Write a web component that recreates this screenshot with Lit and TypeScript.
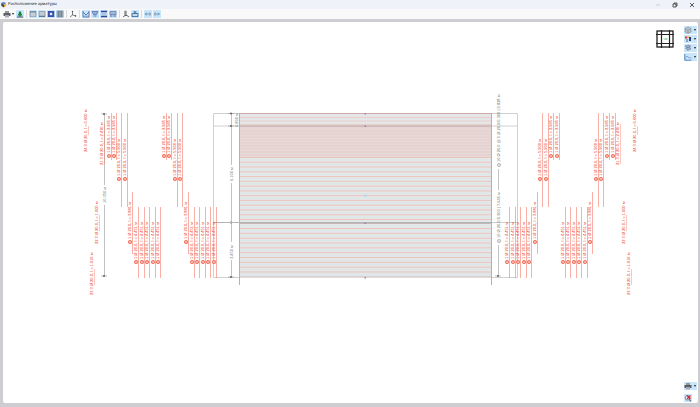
import { LitElement, html, svg, css } from "lit";
import { customElement } from "lit/decorators.js";

const RED = "#f4644f";

/* Toolbar glyphs, drawn on an 8 x 8 grid */
const glyphs: Record<string, unknown> = {
  printer: svg`<path d="M2 1h4v2H2z" fill="#999"/><path d="M.5 3h7v3h-7z" fill="#5b5f65"/><path d="M2 5h4v2.500H2z" fill="#aab"/>`,
  tree: svg`<path d="M4 1l1.700 2H5l1.600 2.400H4.700v1H3.300v-1H1.400L3 3h-.7z" fill="#17803c"/><path d="M1 7h6" stroke="#234" stroke-width=".8"/>`,
  table: svg`<path d="M1 1.500h6v5H1z" fill="#bcc3c9" stroke="#8298ab" stroke-width=".7"/><path d="M1 2h6" stroke="#5b7892"/><path d="M3 2v4.500M5 2v4.500" stroke="#e6eaee" stroke-width=".5"/>`,
  slab: svg`<path d="M1 1.500h6v5H1z" fill="#c4c9cd" stroke="#7f95a8" stroke-width=".7"/><path d="M1 6.300h6" stroke="#587088"/>`,
  opening: svg`<path d="M.8 1h6.400v6H.8z" fill="#3a4fa8"/><path d="M2.800 2.800h2.400v2.400H2.800z" fill="#e6e8ff"/>`,
  bars: svg`<path d="M1 1h6v6H1z" fill="#adb7c0" stroke="#74899c" stroke-width=".6"/><path d="M2.500 1v6M4 1v6M5.500 1v6" stroke="#5d6f80" stroke-width=".7"/>`,
  axes: svg`<path d="M3.500 1.500v3.500l-2.500 2M3.500 5l3.500 1" stroke="#555b60" stroke-width=".8" fill="none"/><path d="M2.700 2l.8-1.200.8 1.200zM6 5l1.500 1-1.500.8z" fill="#333"/>`,
  mesh: svg`<path d="M1 1v6h6V1M1 2l3 3 3-3" stroke="#5673ad" stroke-width=".9" fill="none"/><path d="M1 6h6" stroke="#7c90bd" stroke-width=".6"/>`,
  funnel: svg`<path d="M1 1.500h6L5.500 4.500h-3z" fill="#9aafd6" stroke="#4d6aaf" stroke-width=".7"/><path d="M2.500 6h3" stroke="#4d6aaf" stroke-width=".9"/>`,
  layers: svg`<path d="M1 1.500h6M1 6.500h6" stroke="#2f4796" stroke-width="1.300"/><path d="M1.500 4h5" stroke="#93a7cf"/>`,
  frame: svg`<path d="M1 1.500h6v3H1z" fill="#a7b8d6" stroke="#5e78ac" stroke-width=".7"/><path d="M2 4.500v2.500M6 4.500v2.500M1 6h6" stroke="#5e78ac" stroke-width=".7"/>`,
  column: svg`<path d="M4 .8v4.700M3 .8v4.700M1 7l2-1.500h2L7 7" stroke="#555a60" stroke-width=".9" fill="none"/>`,
  footing: svg`<path d="M1 3.500v3h6v-3z" fill="#c7daea" stroke="#315f92" stroke-width=".8"/><path d="M4 1v2.500M2.500 2h3" stroke="#315f92" stroke-width=".8"/>`,
  left: svg`<path d="M1 4h6" stroke="#6d8fae" stroke-width=".9"/><path d="M3 2.500L1 4l2 1.500M5 3h2M5 5h2" stroke="#6d8fae" stroke-width=".6" fill="none"/>`,
  right: svg`<path d="M1 4h6" stroke="#6d8fae" stroke-width=".9"/><path d="M1 3h2M1 5h2M4.500 2.500L6 4 4.500 5.500" stroke="#6d8fae" stroke-width=".6" fill="none"/>`,
  cube: svg`<path d="M1 2.500L4 1l3 1.500v3.500L4 7.300 1 6zM1 2.500l3 1.300 3-1.300M4 3.800v3.500" fill="#b9bfc5" stroke="#7d8b98" stroke-width=".6"/>`,
  colors: svg`<path d="M1 1.500h2v2H1z" fill="#e33a2b"/><path d="M3 1.500h2v1.500H3z" fill="#f2b632"/><path d="M5 2h2v4H5z" fill="#2c3f86"/><path d="M2 4h2v3H2z" fill="#8ba6c6"/>`,
  stack: svg`<path d="M1 2l4-1 2 1.500-4 1.300zM1.500 4l4-.8L7 5 3.500 6.500z" fill="#a6b0c2" stroke="#6d7ea0" stroke-width=".6"/>`,
  curve: svg`<path d="M.8 1v6.200h6.700" stroke="#3f75b5" stroke-width=".8" fill="none"/><path d="M1 5.500l2-2.500 2 1.800L7.300 5" stroke="#6c8db8" stroke-width=".7" fill="none"/>`,
  zoomOff: svg`<circle cx="3.500" cy="3.800" r="2.300" fill="#eef" stroke="#68737e" stroke-width=".8"/><path d="M5 5.500L7 7.300" stroke="#444" stroke-width="1"/><path d="M3 1.500l3.500 3.500M6.500 1.500L3 5" stroke="#d8252c" stroke-width="1.200"/>`,
};

const icon = (name: string) => html`<svg class="glyph" viewBox="0 0 8 8" aria-hidden="true">${glyphs[name]}</svg>`;

type Tool = [icon: string, label: string, on: boolean];
const groups: Tool[][] = [
  [["tree", "Дерево", true]],
  [["table", "Верхняя", true], ["slab", "Нижняя", true], ["opening", "Отверстия", true], ["bars", "Стержни", true]],
  [["axes", "Оси", false]],
  [["mesh", "Сетка", true], ["funnel", "Фильтр", true], ["layers", "Слои", true], ["frame", "Каркас", true]],
  [["column", "Колонна", false], ["footing", "Фундамент", true]],
  [["left", "Назад", true], ["right", "Вперёд", true]],
];

interface Family { text: string; top: number; bottom: number; start: number; xs: number[]; }

/* Bars that run along the wall; x is where the bar is, its label stands left of it */
const families: Family[] = [
  { text: "1 Ø 20.0, l = 2.945 м", top: 113, bottom: 160, start: 158, xs: [111, 116, 166, 171, 553, 559, 609, 615] },
  { text: "1 Ø 20.0, l = 5.900 м", top: 113, bottom: 207, start: 181, xs: [121, 127, 177, 182, 542, 548, 598, 603] },
  { text: "1 Ø 20.0, l = 3.881 м", top: 192, bottom: 254, start: 244, xs: [132, 188, 537, 592] },
  { text: "1 Ø 20.0, l = 4.451 м", top: 207, bottom: 278, start: 264,
    xs: [138, 144, 149, 155, 160, 194, 199, 205, 210, 216, 509, 515, 520, 526, 531, 565, 570, 576, 581, 587] },
];

/* Short bars at the outer ends: text, x, text start, bar top, bar bottom */
const ends: [string, number, number, number, number][] = [
  ["24 3 Ø 20.0, l = 0.600 м", 88, 152, 126, 135],
  ["21 3 Ø 20.0, l = 2.430 м", 104, 165, 124, 164],
  ["22 3 Ø 20.0, l = 1.000 м", 99, 244, 215, 231],
  ["23 3 Ø 20.0, l = 1.016 м", 94, 295, 269, 285],
  ["21 3 Ø 20.0, l = 2.430 м", 620, 165, 124, 164],
  ["22 3 Ø 20.0, l = 1.000 м", 626, 244, 215, 231],
  ["23 3 Ø 20.0, l = 1.016 м", 631, 295, 269, 285],
  ["24 3 Ø 20.0, l = 0.600 м", 637, 152, 126, 135],
];

const upright = (text: string, x: number, y: number, cls: string) =>
  svg`<text class=${cls} transform="translate(${x} ${y}) rotate(-90)">${text}</text>`;

const family = (f: Family) => f.xs.map(x => svg`
  <path d="M${x + 0.5} ${f.top}V${f.bottom}" stroke=${RED} stroke-width="1" opacity=".5"/>
  <circle cx=${x - 2} cy=${f.start - 2} r="1.700" fill="#f9b0a4" stroke="#ee442c" stroke-width=".6"/>
  ${upright(f.text, x - 1, f.start - 5, "bar")}`);

const end = ([text, x, start, top, bottom]: (typeof ends)[number]) => svg`
  ${upright(text, x - 1, start, "bar")}
  <path d="M${x + 0.5} ${top}V${bottom}" stroke=${RED} stroke-width="1" opacity=".35"/>`;

const tick = (x: number, y: number) => svg`<path d="M${x - 3} ${y}h6" stroke="#999" stroke-width=".6"/><circle cx=${x} cy=${y} r="1" fill="#666"/>`;
const line = (d: string, color = "#c2c2c4", width = 1) => svg`<path d=${d} fill="none" stroke=${color} stroke-width=${width}/>`;

const stripes = (from: number, to: number, count: number) =>
  Array.from({ length: count }, (_, i) => from + ((to - from) * i) / (count - 1));

const wall = () => svg`
  <rect x="239" y="113" width="253" height="164" fill="#e3e7e7"/>
  <rect x="239" y="126" width="253" height="31" fill="#e8d8d6"/>
  ${stripes(128, 155, 10).map(y => line(`M239 ${y}H492`, "#e3cfcd"))}
  ${stripes(117.5, 124.5, 3).map(y => line(`M239 ${y}H492`, "#eccdc9"))}
  ${stripes(157.500, 219.500, 14).map(y => line(`M239 ${y}H492`, "#edc3bd"))}
  ${stripes(160, 217, 13).map(y => line(`M239 ${y}H492`, "#dce7e9"))}
  ${stripes(228.500, 272, 10).map(y => line(`M239 ${y}H492`, "#edc3bd"))}
  ${stripes(231, 274, 10).map(y => line(`M239 ${y}H492`, "#dce7e9"))}
  ${line("M239 113.500H492", "#cfaaa6")}${line("M239 126H492", "#b99e9b")}
  ${line("M213 222.500H492", "#b2b4b5")}${line("M239 223.500H492", "#c3b8b7")}
  ${line("M239 277H492", "#c9b7b7")}
  ${line("M239.500 113V285M491.500 113V285", "#ee9a8f")}
  ${[113.5, 126, 223, 277.5].map(y => svg`<rect x="364.500" y=${y - 0.5} width="1.500" height="1.500" fill="#b36fbd"/>`)}
  <circle cx="365.500" cy="195.500" r="1.500" fill="#bcd8e8"/>`;

const dimensions = () => svg`
  ${line("M239 113.500H213.500V277.500H239M213 126H239M492 113.500H517.500V277.500H492M492 126H518M492 222.500H518", "#d0d0d2")}
  ${line("M231.500 113V165M231.500 183V242M231.500 260V277")}
  ${[113.5, 126, 222.5, 277].map(y => tick(231, y))}
  ${upright("0.800 м", 238, 127, "dim")}${upright("6.100 м", 233, 181, "dim")}${upright("3.450 м", 233, 259, "dim")}
  ${line("M104.500 113V185M104.500 205V277")}${tick(104, 114)}${tick(104, 276)}
  ${upright("10.350 м", 106, 203, "dim")}
  ${line("M498.500 169V190M498.500 245V276")}${tick(498, 276)}
  <circle cx="499" cy="165" r="1.700" fill="#ddd" stroke="#999" stroke-width=".5"/>
  <circle cx="499" cy="241" r="1.700" fill="#ddd" stroke="#999" stroke-width=".5"/>
  ${upright("16 Ø 20.0 @ 5 Ø 20.0/0.300 | 0.828 м", 500, 162, "dim")}
  ${upright("16 Ø 20.0/0.300 | 7.645 м", 500, 238, "dim")}`;

@customElement("app-root")
export class AppRoot extends LitElement {
  static styles = css`
    :host { display: flex; flex-direction: column; height: 100vh; background: #cdcdd2; font: 5px/8px "Liberation Sans", Arial, sans-serif; color: #222; }
    header { display: flex; align-items: center; height: 9px; background: #eff3f9; }
    h1 { flex: 1; margin: 0 0 0 1px; font: 400 4px/8px "Open Sans", sans-serif; color: #111; text-rendering: geometricPrecision; }
    .logo { width: 7px; height: 7px; }
    .window { display: flex; }
    button { display: flex; align-items: center; justify-content: center; padding: 0; border: 0; background: none; height: 8px; width: 8px; color: #222; }
    .window button { width: 17px; }
    .window svg { width: 6px; height: 6px; fill: none; stroke: #333; }
    nav { display: flex; align-items: center; gap: 1px; height: 10px; padding: 0 3px; background: #f9f9fa; }
    .group { display: flex; gap: 1px; padding-right: 2px; margin-right: 1px; border-right: 1px solid #d9dbde; }
    .group:last-child { border-color: transparent; }
    .glyph { width: 8px; height: 8px; flex: none; }
    .on { background: #c9e5fa; }
    .menu { width: 12px; justify-content: space-between; }
    .menu::after { content: ""; border: 1px solid transparent; border-top: 2px solid #222; border-bottom: 0; margin-right: 1px; }
    main { position: relative; flex: 1; min-height: 0; display: flex; margin: 3px 2px 4px 3px; background: #fff; border-radius: 2px; }
    .plan { flex: 1; min-width: 0; height: 100%; }
    .plan text { font-family: "Liberation Sans", Arial, sans-serif; font-size: 4px; }
    .bar { fill: #ea2c12; }
    .dim { fill: #707074; }
    .side { position: absolute; right: 1px; display: flex; flex-direction: column; gap: 1px; }
    .side .menu { width: 13px; }
    .top { top: 4px; }
    .bottom { bottom: 1px; gap: 4px; }
    .view { position: absolute; top: 8px; right: 24px; width: 18px; height: 18px; }
    .view svg { width: 18px; height: 18px; }
  `;

  private tool([name, label, on]: Tool) {
    return html`<button class=${on ? "on" : ""} aria-label=${label}>${icon(name)}</button>`;
  }

  private menu(name: string, label: string, on = true) {
    return html`<button class=${on ? "menu on" : "menu"} aria-label=${label} aria-haspopup="true">${icon(name)}</button>`;
  }

  render() {
    return html`
      <header>
        <svg class="logo" viewBox="0 0 7 7" aria-hidden="true">
          <path d="M1 2l2.500-1 2.500 1-2 2z" fill="#5b7fb4"/><path d="M1 2l3 2v2.500L1.500 5z" fill="#3c4047"/><path d="M4 4l2.300-1.500V5L4 6.500z" fill="#e3b437"/>
        </svg>
        <h1>Расположение арматуры</h1>
        <div class="window">
          <button aria-label="Свернуть"><svg viewBox="0 0 6 6"><path d="M1 3h4" stroke="#bbb" stroke-width=".6"/></svg></button>
          <button aria-label="Развернуть"><svg viewBox="0 0 6 6"><path d="M1 2h3v3H1zM2 2V1h3v3H4" stroke-width=".8"/></svg></button>
          <button aria-label="Закрыть"><svg viewBox="0 0 6 6"><path d="M1 1l4 4M5 1L1 5" stroke-width=".8"/></svg></button>
        </div>
      </header>
      <nav aria-label="Инструменты">
        ${this.menu("printer", "Печать", false)}
        ${groups.map(g => html`<div class="group">${g.map(t => this.tool(t))}</div>`)}
      </nav>
      <main>
        <svg class="plan" viewBox="3 22 695 381" role="img" aria-label="Расположение арматуры">
          ${dimensions()}${wall()}${families.map(family)}${ends.map(end)}
        </svg>
        <button class="view" aria-label="Вид">
          <svg viewBox="0 0 18 18" fill="none">
            <rect x="1" y="1" width="16" height="16" stroke="#222" stroke-width="1.300"/>
            <path d="M5.500 0v18M13.500 0v18M0 4.500h18M0 13.500h18" stroke="#222" stroke-width="1.200"/>
            <path d="M7.500 9h4M10 8v2" stroke="#74c184" stroke-width=".8"/>
          </svg>
        </button>
        <div class="side top">
          ${this.menu("cube", "Проекция")}${this.menu("colors", "Цвета")}${this.menu("stack", "Слои")}${this.menu("curve", "Результаты")}
        </div>
        <div class="side bottom">
          ${this.menu("printer", "Печать вида")}
          <button class="on" aria-label="Сбросить масштаб">${icon("zoomOff")}</button>
        </div>
      </main>`;
  }
}
